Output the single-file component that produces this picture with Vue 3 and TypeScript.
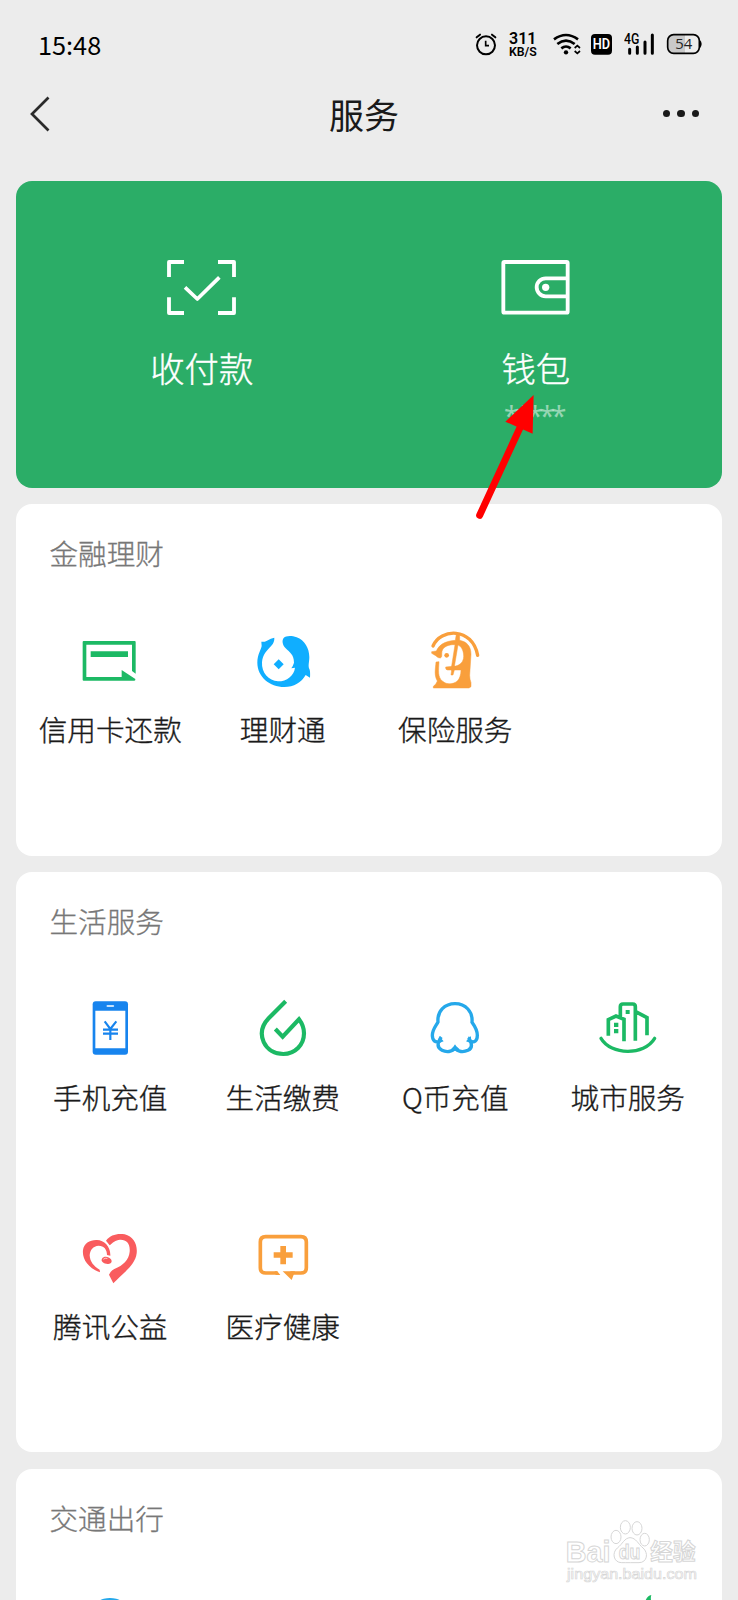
<script setup lang="ts">
interface Shape {
  d: string
  fill?: string
  stroke?: string
  width?: number
  cap?: 'butt' | 'round'
}
interface Service {
  id: string
  label?: string
  view: string
  shapes: Shape[]
}
interface Section {
  title: string
  items: Service[]
}

const GREEN = '#1cb964'
const BLUE = '#10aeff'
const SKY = '#25a8ea'
const PHONE = '#1784ee'
const ORANGE = '#f99f3c'
const RED = '#f95c5e'

const sections: Section[] = [
  {
    title: '金融理财',
    items: [
      {
        id: 'credit',
        label: '信用卡还款',
        view: '241 450 180 180',
        shapes: [
          { d: 'M252 483H405Q408 483 408 486V581L397 573V494H260V591H366V570L407 597Q408 602 404 602H252Q249 602 249 599V486Q249 483 252 483Z', fill: GREEN },
          { d: 'M273 514H385V531H273Z', fill: GREEN },
        ],
      },
      {
        id: 'wealth',
        label: '理财通',
        view: '38 60 180 180',
        shapes: [
          { d: 'M63 95Q70 97 80 92Q92 84 102 83Q103 96 93 107C80 121 67 132 65 157C63 188 85 213 113 214C140 214 161 197 164 173L153 175Q158 168 161 158C161 134 148 127 136 115C126 105 124 91 130 84C137 77 153 76 169 82C193 91 207 115 207 141C207 158 202 168 208 179Q210 185 209 203L196 195C184 217 160 231 132 231C88 231 51 200 51 158C51 133 63 118 64 108Z', fill: BLUE },
          { d: 'M115 148L130 163L115 178L100 163Z', fill: BLUE },
        ],
      },
      {
        id: 'insurance',
        label: '保险服务',
        view: '556 60 180 180',
        shapes: [
          { d: 'M580 108C602 55 698 50 714 136', stroke: ORANGE, width: 10, cap: 'round' },
          { d: 'M660 91C681 95 694 108 694 133L690 196Q690 208 694 218V230L688 234H581V229Q590 223 593 213C583 196 587 178 589 156L598 155C597 181 593 201 609 214C622 225 641 223 653 213C660 206 664 193 664 180H644L640 195H634L636 180H624Q617 180 618 171L648 168C662 165 672 155 672 139C672 119 663 108 655 105L642 182L634 180L646 104C627 103 610 110 607 124C605 133 609 142 602 144Q596 145 588 137L576 130V125L590 123C597 107 613 93 647 91L650 72H660Z', fill: ORANGE, stroke: ORANGE, width: 1.5 },
          { d: 'M614 136A7 7 0 1 1 628 136A7 7 0 1 1 614 136Z', fill: ORANGE },
        ],
      },
    ],
  },
  {
    title: '生活服务',
    items: [
      {
        id: 'phone',
        label: '手机充值',
        view: '241 414 180 180',
        shapes: [
          { d: 'M288 424H376Q385 424 385 433V575Q385 584 376 584H288Q279 584 279 575V433Q279 424 288 424Z', fill: PHONE },
          { d: 'M287 452H377V565H287Z', fill: '#fff' },
          { d: 'M323 438H341', stroke: '#fff', width: 5, cap: 'round' },
          { d: 'M315 484L332 507L350 484M332 506V540M310 509H355M310 521H355', stroke: PHONE, width: 6.5 },
        ],
      },
      {
        id: 'bills',
        label: '生活缴费',
        view: '758 414 180 180',
        shapes: [
          { d: 'M856 424L805 475C782 499 780 523 790 546C801 570 824 582 849 582C884 582 911 555 911 520Q911 498 896 478L847 530L825 507', stroke: GREEN, width: 12.5 },
        ],
      },
      {
        id: 'qcoin',
        label: 'Q币充值',
        view: '136 54 180 180',
        shapes: [
          { d: 'M185 171Q179 178 178 185C167 188 158 182 158 166C158 149 168 139 175 126C172 93 196 71 226 71C258 71 280 95 277 127C287 141 293 153 293 166C293 183 284 189 273 184Q270 176 265 173M272 183C277 194 277 205 265 211C252 217 234 217 226 203C218 217 199 217 187 211C175 205 173 195 178 184', stroke: SKY, width: 10 },
          { d: 'M178 168L192 184L177 190ZM274 168L259 184L274 190ZM214 208L226 196L240 208L226 213Z', fill: SKY },
        ],
      },
      {
        id: 'city',
        label: '城市服务',
        view: '653 54 180 180',
        shapes: [
          { d: 'M662 175C692 226 791 228 823 175', stroke: GREEN, width: 10, cap: 'round' },
          { d: 'M684 167V119L707 108L731 118V184M720 112V80Q720 72 728 72H757Q765 72 765 80V182M766 95L800 113V166', stroke: GREEN, width: 11 },
          { d: 'M736 90H748V102H736ZM701 128H714V141H701ZM701 147H714V160H701Z', fill: GREEN },
        ],
      },
      {
        id: 'charity',
        label: '腾讯公益',
        view: '151 51 180 180',
        shapes: [
          { d: 'M211 187C174 173 157 146 160 120C163 100 181 89 202 90C224 91 243 109 242 137L232 135C232 118 223 107 207 107C190 108 181 120 180 136C181 155 191 168 210 179Z', fill: RED },
          { d: 'M229 92C242 74 264 69 285 73C311 79 324 103 321 130C317 166 279 190 251 220L238 194Q244 181 254 177C281 166 298 148 300 125C302 100 290 88 271 89C257 90 249 98 240 106Z', fill: RED },
          { d: 'M217 146C222 138 237 139 244 148C249 156 244 163 234 162C223 161 212 154 217 146Z', fill: RED },
          { d: 'M222 147Q226 143 232 145', stroke: '#fff', width: 2, cap: 'round' },
        ],
      },
      {
        id: 'health',
        label: '医疗健康',
        view: '668 51 180 180',
        shapes: [
          { d: 'M741 189H706Q690 189 690 173V96Q690 80 706 80H812Q828 80 828 96V173Q828 189 812 189H780', stroke: ORANGE, width: 11 },
          { d: 'M733 184H741L750 195H736ZM757 184H794L784 210Z', fill: ORANGE },
          { d: 'M750 108H767V127H787V143H767V163H750V143H730V127H750Z', fill: ORANGE },
        ],
      },
    ],
  },
  {
    title: '交通出行',
    items: [
      {
        id: 'travel',
        view: '0 0 180 180',
        shapes: [{ d: 'M90 9A72 72 0 1 1 89.9 9Z', fill: SKY }],
      },
      { id: 'tickets', view: '0 0 180 180', shapes: [] },
      { id: 'rides', view: '0 0 180 180', shapes: [] },
      {
        id: 'hotel',
        view: '0 0 180 180',
        shapes: [{ d: 'M142 18Q148 2 160 0Q157 8 160 20V40H138Z', fill: GREEN }],
      },
    ],
  },
]
</script>

<template>
  <div class="page">
    <header class="status">
      <span class="clock">15:48</span>
      <div class="indicators">
        <svg class="alarm" viewBox="105 99 66 72">
          <circle cx="138" cy="139" r="27" fill="none" stroke="#000" stroke-width="6" />
          <path d="M137 125V140H147" fill="none" stroke="#000" stroke-width="5" />
          <path d="M110 115L120 107M166 115L156 107" stroke="#000" stroke-width="6" stroke-linecap="round" />
        </svg>
        <div class="speed"><b>311</b><b class="unit">KB/S</b></div>
        <svg class="wifi" viewBox="336 99 90 72">
          <path d="M342 121Q378 95 414 121M352 135Q378 115 404 135M364 148Q378 137 392 148" fill="none" stroke="#000" stroke-width="8" />
          <circle cx="378" cy="160" r="6.500" />
          <path d="M404 147L412 140L420 147M404 156L412 163L420 156" fill="none" stroke="#000" stroke-width="5" />
        </svg>
        <svg class="hd" viewBox="453 99 63 72">
          <rect x="453" y="105" width="63" height="62" rx="12" />
          <text x="484.500" y="151" textLength="52" lengthAdjust="spacingAndGlyphs">HD</text>
        </svg>
        <svg class="signal" viewBox="552 99 93 72">
          <text x="552" y="136" textLength="46" lengthAdjust="spacingAndGlyphs">4G</text>
          <path d="M569 151V163M592 144V163M615 129V163M637 108V163" stroke="#000" stroke-width="9" stroke-linecap="round" />
        </svg>
        <svg class="battery" viewBox="678 99 108 72">
          <path d="M700 108H735V163H700Q684 163 684 148V123Q684 108 700 108Z" fill="#c9c9c9" />
          <rect x="683" y="107" width="95" height="56" rx="18" fill="none" stroke="#000" stroke-width="5" />
          <path d="M779 122Q785 127 785 135T779 149Z" />
          <text x="731" y="150" textLength="51" lengthAdjust="spacingAndGlyphs">54</text>
        </svg>
      </div>
    </header>

    <nav class="nav">
      <svg class="back" viewBox="0 0 20 36">
        <path d="M18.500 1.500L2 18L18.500 34.500" fill="none" stroke="#2a2a2a" stroke-width="2.700" />
      </svg>
      <h1>服务</h1>
      <div class="more"><i /><i /><i /></div>
    </nav>

    <main>
      <section class="hero">
        <div class="hero-item">
          <svg class="hero-icon" viewBox="0 0 207 165">
            <path d="M51 6H6V51M153 6H201V51M6 112V159H51M201 112V159H153" fill="none" stroke="#fff" stroke-width="11.500" stroke-linejoin="round" />
            <path d="M54 82L91 117L157 52" fill="none" stroke="#fff" stroke-width="11" stroke-linejoin="round" />
          </svg>
          <span class="hero-label">收付款</span>
        </div>
        <div class="hero-item">
          <svg class="hero-icon" viewBox="0 0 207 165">
            <rect x="7" y="6" width="193" height="152" rx="3" fill="none" stroke="#fff" stroke-width="11.500" />
            <path d="M199 55H134A26 26 0 0 0 134 109H199" fill="none" stroke="#fff" stroke-width="11.500" />
            <circle cx="134" cy="82" r="11" fill="#fff" />
          </svg>
          <span class="hero-label">钱包</span>
          <span class="masked">*****</span>
        </div>
        <svg class="arrow" viewBox="40 490 190 385">
          <path d="M60 857L182 592" stroke="#f00" stroke-width="21" stroke-linecap="round" />
          <path d="M222 496L137 576L219 612Z" fill="#f00" />
        </svg>
      </section>

      <section v-for="section in sections" :key="section.title" class="card">
        <h2>{{ section.title }}</h2>
        <div class="grid">
          <div v-for="item in section.items" :key="item.id" class="service">
            <svg :viewBox="item.view">
              <path
                v-for="(s, i) in item.shapes"
                :key="i"
                :d="s.d"
                :fill="s.fill ?? 'none'"
                :stroke="s.stroke ?? 'none'"
                :stroke-width="s.width ?? 0"
                :stroke-linecap="s.cap ?? 'butt'"
              />
            </svg>
            <span v-if="item.label">{{ item.label }}</span>
          </div>
        </div>
      </section>
    </main>

    <svg class="watermark" viewBox="70 260 410 205">
      <g fill="#fff" stroke="#d6d6d6" stroke-width="3">
        <text class="brand" x="78" y="394" textLength="134" lengthAdjust="spacingAndGlyphs">Bai</text>
        <path d="M271 322C254 323 249 341 233 353C216 367 221 397 246 397C260 397 284 397 298 397C323 397 327 367 310 353C295 341 290 323 271 322Z" />
        <ellipse cx="229" cy="320" rx="15" ry="20" />
        <ellipse cx="257" cy="291" rx="15" ry="20" />
        <ellipse cx="292" cy="294" rx="15" ry="20" />
        <ellipse cx="315" cy="328" rx="14" ry="19" />
        <text class="du" x="237" y="385" textLength="65" lengthAdjust="spacingAndGlyphs">du</text>
        <text class="cn" x="332" y="388" textLength="136" lengthAdjust="spacingAndGlyphs">经验</text>
        <text class="url" x="82" y="445" textLength="390" lengthAdjust="spacingAndGlyphs">jingyan.baidu.com</text>
      </g>
    </svg>
  </div>
</template>

<style>
html,
body {
  background: #ececec;
}
</style>

<style scoped>
.page {
  position: relative;
  width: 738px;
  height: 1600px;
  overflow: hidden;
  background: #ececec;
  color: #1a1a1a;
  font-family: 'Noto Sans CJK SC', 'Noto Sans', sans-serif;
  font-weight: 300;
}
svg {
  display: block;
}
.status {
  display: flex;
  justify-content: space-between;
  align-items: center;
  height: 90px;
  padding: 0 36px 0 38px;
  box-sizing: border-box;
}
.clock {
  margin-top: -3px;
  font: 400 25.3px/30px 'Noto Sans CJK SC', sans-serif;
  color: #000;
}
.indicators {
  display: flex;
}
.indicators svg {
  height: 24px;
}
.alarm {
  width: 22px;
}
.speed {
  width: 30px;
  margin-left: 12px;
  padding-top: 1px;
  font-family: Roboto, sans-serif;
  color: #000;
}
.speed b {
  display: block;
  font-size: 16px;
  line-height: 12px;
  font-weight: 600;
}
.speed .unit {
  font-size: 12.3px;
  line-height: 14px;
}
.wifi {
  width: 30px;
  margin-left: 13px;
}
.hd {
  width: 21px;
  margin-left: 9px;
}
.hd text {
  font: 600 42px Roboto, sans-serif;
  fill: #fff;
  text-anchor: middle;
}
.signal {
  width: 31px;
  margin-left: 12px;
}
.signal text {
  font: 500 43px Roboto, sans-serif;
}
.battery {
  width: 36px;
  margin-left: 11px;
}
.battery text {
  font: 400 46px 'Open Sans', sans-serif;
  fill: #222;
  text-anchor: middle;
}
.nav {
  display: grid;
  grid-template-columns: 1fr auto 1fr;
  align-items: center;
  height: 50px;
  margin: -1.500px 0 42px;
  padding: 0 39px 0 30px;
}
.back {
  width: 20px;
  height: 36px;
}
h1 {
  margin: 0;
  font-size: 35px;
  line-height: 50px;
  font-weight: 400;
  position: relative;
  left: -0.500px;
}
.more {
  display: flex;
  justify-content: flex-end;
  gap: 7px;
}
.more i {
  width: 7.5px;
  height: 7.5px;
  border-radius: 50%;
  background: #1a1a1a;
}
main {
  display: flex;
  flex-direction: column;
  gap: 16.500px;
  padding: 0 16px;
}
.hero {
  position: relative;
  display: grid;
  grid-template-columns: 334px 334px;
  justify-content: center;
  height: 307px;
  margin-right: 0.500px;
  border-radius: 16px;
  background: #2bad67;
  color: #fff;
}
.hero-item {
  display: flex;
  flex-direction: column;
  align-items: center;
  padding-top: 79.500px;
}
.hero-icon {
  width: 69px;
  height: 55px;
}
.hero-label {
  margin-top: 27px;
  font-size: 34.300px;
  line-height: 50px;
  -webkit-text-stroke: 0.400px currentColor;
}
.masked {
  margin: 4px 0 0 -4px;
  font: 400 27px/40px 'Noto Sans', sans-serif;
  letter-spacing: -3px;
  color: rgba(255, 255, 255, 0.5);
}
.arrow {
  position: absolute;
  left: 457.300px;
  top: 212.800px;
  width: 63.300px;
  height: 128.300px;
  z-index: 2;
}
.card {
  padding: 29px 8px 0;
  border-radius: 16px;
  background: #fff;
}
h2 {
  margin: 0 0 54px 25.500px;
  font-size: 28.600px;
  line-height: 40px;
  font-weight: 300;
  color: #777;
  -webkit-text-stroke: 0.300px currentColor;
}
.grid {
  display: grid;
  grid-template-columns: repeat(4, 1fr);
  grid-auto-rows: 228.500px;
}
.service {
  display: flex;
  flex-direction: column;
  align-items: center;
  padding-top: 3px;
}
.service svg {
  width: 60px;
  height: 60px;
}
.service span {
  margin-top: 19px;
  font-size: 28.600px;
  line-height: 40px;
  white-space: nowrap;
  -webkit-text-stroke: 0.350px currentColor;
}
.watermark {
  position: absolute;
  left: 563.300px;
  top: 1516.700px;
  width: 136.700px;
  height: 68.300px;
}
.brand {
  font: 700 90px 'Liberation Sans', sans-serif;
}
.du {
  font: 700 58px 'Liberation Sans', sans-serif;
}
.cn {
  font: 700 68px 'Noto Sans CJK SC', sans-serif;
}
.url {
  font: 400 45px 'Liberation Sans', sans-serif;
}
.watermark .url {
  stroke-width: 2px;
}
</style>
